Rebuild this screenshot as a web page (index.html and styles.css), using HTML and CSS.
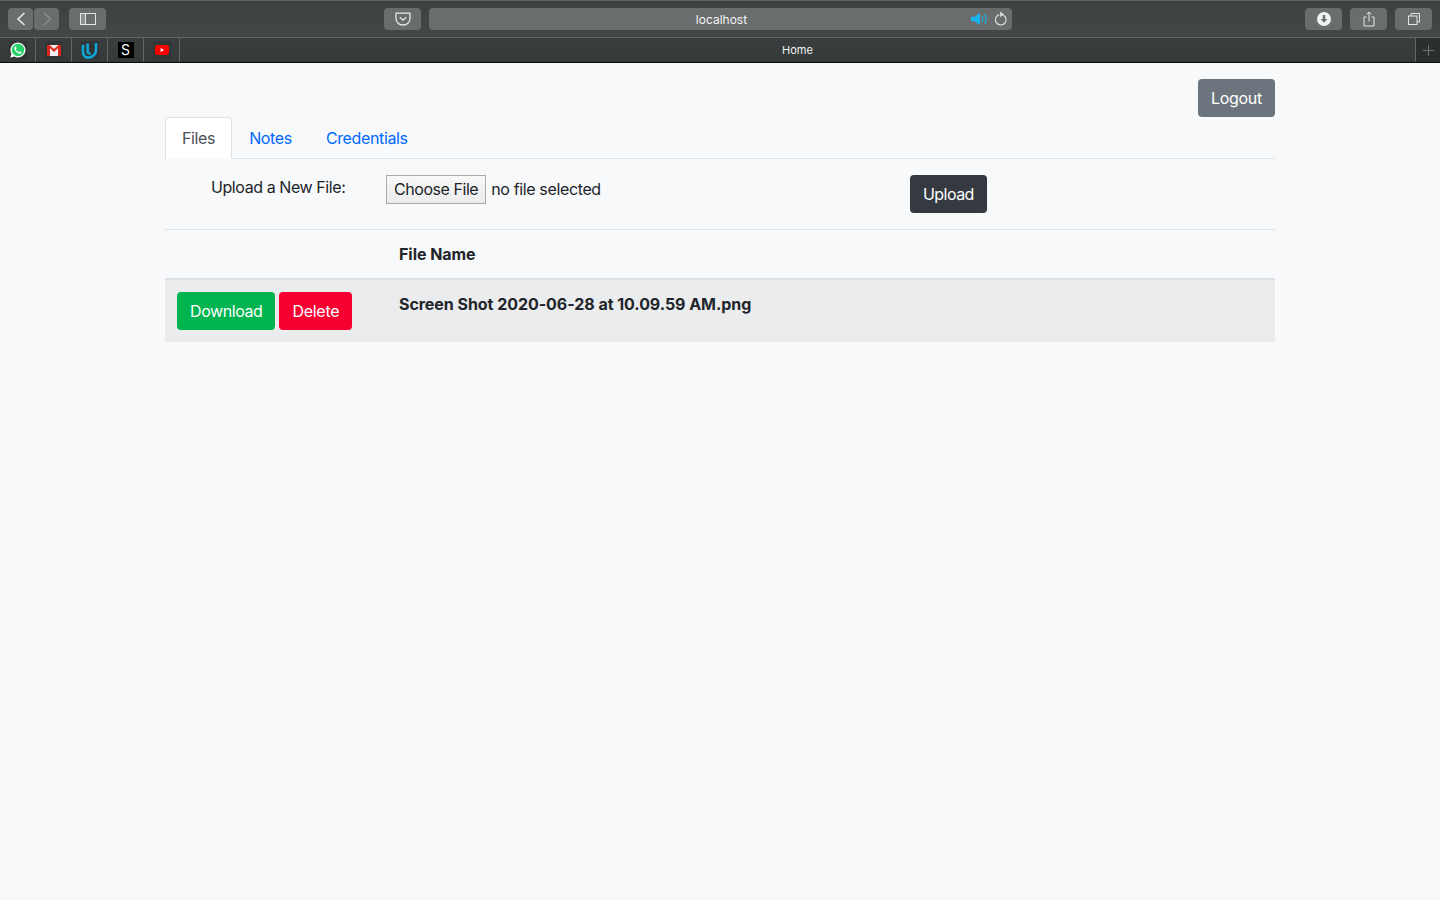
FILE: index.html
```html
<!DOCTYPE html>
<html lang="en">
<head>
  <meta charset="UTF-8" />
  <meta name="viewport" content="width=device-width, initial-scale=1.0" />
  <title>Home</title>
  <link rel="stylesheet" href="styles.css">
</head>
<body>
  <div class="browser-bar">
    <div class="toolbar">
      <div class="tool tool-back">
        <svg width="12" height="16" viewBox="0 0 12 16"><path d="M9.5 2 L3 8 L9.5 14" fill="none" stroke="#e8e9e9" stroke-width="1.6"/></svg>
      </div>
      <div class="tool tool-forward">
        <svg width="12" height="16" viewBox="0 0 12 16"><path d="M3 2 L9.5 8 L3 14" fill="none" stroke="#8e9191" stroke-width="1.4"/></svg>
      </div>
      <div class="tool tool-sidebar">
        <svg width="16" height="12" viewBox="0 0 16 12"><rect x="0.5" y="0.5" width="15" height="11" fill="none" stroke="#e4e5e5"/><rect x="1" y="1" width="4.5" height="10" fill="#8d9090"/><path d="M5.5 0.5 V11.5" stroke="#e4e5e5"/></svg>
      </div>
      <div class="tool tool-pocket">
        <svg width="16" height="14" viewBox="0 0 16 14"><path d="M1 1.2 H15 V6.5 C15 10.5 11.8 13 8 13 C4.2 13 1 10.5 1 6.5 Z" fill="none" stroke="#e8e9e9" stroke-width="1.3" stroke-linejoin="round"/><path d="M4.8 5.2 L8 8.2 L11.2 5.2" fill="none" stroke="#e8e9e9" stroke-width="1.3"/></svg>
      </div>
      <div class="address">
        <span class="address-text">localhost</span>
        <svg class="icon-sound" width="17" height="12" viewBox="0 0 17 12"><path d="M0 3.8 H3.5 L9 0 V12 L3.5 8.2 H0 Z" fill="#19b5f1"/><path d="M11 3 Q12.6 6 11 9 M13.8 1 Q16.6 6 13.8 11" fill="none" stroke="#19b5f1" stroke-width="1.1"/></svg>
        <svg class="icon-reload" width="12" height="15" viewBox="0 0 12 15"><path d="M8.6 4.2 A5.3 5.3 0 1 1 4.2 3.6" fill="none" stroke="#dfe0e0" stroke-width="1.1"/><path d="M5.2 0.6 L9.2 3.6 L5.2 6 Z" fill="#dfe0e0"/></svg>
      </div>
      <div class="tool tool-download">
        <svg width="14" height="14" viewBox="0 0 14 14"><circle cx="7" cy="7" r="7" fill="#f0f1f1"/><path d="M5.8 3 H8.2 V7 H10.4 L7 10.8 L3.6 7 H5.8 Z" fill="#6a6d6d"/></svg>
      </div>
      <div class="tool tool-share">
        <svg width="12" height="16" viewBox="0 0 12 16"><path d="M3.5 6 H1 V15 H11 V6 H8.5" fill="none" stroke="#e4e5e5" stroke-width="1"/><path d="M6 10.5 V1.2 M3.8 3.2 L6 1 L8.2 3.2" fill="none" stroke="#e4e5e5" stroke-width="1"/></svg>
      </div>
      <div class="tool tool-tabs">
        <svg width="12" height="12" viewBox="0 0 12 12"><rect x="0.5" y="3" width="8.5" height="8.5" fill="none" stroke="#e4e5e5"/><path d="M3 3 V0.5 H11.5 V9 H9" fill="none" stroke="#e4e5e5"/></svg>
      </div>
    </div>
    <div class="tabstrip">
      <div class="pin">
        <span class="pin-box">
          <svg width="16" height="16" viewBox="0 0 16 16"><path d="M0.3 15.7 L1.4 11.7 A7.5 7.5 0 1 1 4.3 14.6 Z" fill="#fff"/><circle cx="8" cy="8" r="6.2" fill="#25d366"/><path d="M5.6 4.3 L6.6 6.2 L5.9 7.2 C6.5 8.5 7.5 9.5 8.8 10.1 L9.9 9.3 L11.8 10.4 C11.4 11.6 10.2 12 9.2 11.7 C6.9 11 5 9.1 4.4 6.8 C4.1 5.7 4.6 4.7 5.6 4.3 Z" fill="#fff"/></svg>
        </span>
      </div>
      <div class="pin">
        <span class="pin-box">
          <svg width="14" height="11" viewBox="0 0 14 11"><rect width="14" height="11" fill="#eee"/><path d="M0 0 H3 V11 H0 Z M11 0 H14 V11 H11 Z" fill="#d5281f"/><path d="M0 0 H2.5 L7 4 L11.5 0 H14 L7 7 Z" fill="#e8261c"/></svg>
        </span>
      </div>
      <div class="pin">
        <span class="pin-box">
          <svg width="17" height="17" viewBox="0 0 17 17"><path d="M2 2.8 V10 C2 13.8 4.4 15.6 7.4 15.6 C11 15.6 15 12.6 15 8.2 V1 M6.6 1.6 V9 C6.6 10.8 7.6 12 9.6 11.4" fill="none" stroke="#0ea5d8" stroke-width="2.6"/></svg>
        </span>
      </div>
      <div class="pin">
        <span class="pin-s">S</span>
      </div>
      <div class="pin">
        <span class="pin-box">
          <svg width="14" height="10" viewBox="0 0 14 10"><rect width="14" height="10" rx="2.4" fill="#f00"/><path d="M5.6 3 L9.2 5 L5.6 7 Z" fill="#fff"/></svg>
        </span>
      </div>
      <div class="tab-title">Home</div>
      <div class="tab-new">
        <svg width="11" height="11" viewBox="0 0 11 11"><path d="M5.5 0 V11 M0 5.5 H11" stroke="#6f7272" stroke-width="1"/></svg>
      </div>
    </div>
  </div>

  <div class="container">
    <div class="top-actions">
      <button class="btn btn-secondary">Logout</button>
    </div>

    <ul class="nav-tabs">
      <li class="nav-link active">Files</li>
      <li class="nav-link">Notes</li>
      <li class="nav-link">Credentials</li>
    </ul>

    <form class="upload-row">
      <label class="upload-label">Upload a New File:</label>
      <div class="upload-file">
        <span class="file-button">Choose File</span>
        <span class="file-name">no file selected</span>
      </div>
      <div><button type="button" class="btn btn-dark">Upload</button></div>
    </form>

    <table class="table">
      <thead>
        <tr>
          <th class="col-actions"></th>
          <th>File Name</th>
        </tr>
      </thead>
      <tbody>
        <tr>
          <td class="col-actions">
            <div class="row-actions">
              <button class="btn btn-success">Download</button>
              <button class="btn btn-danger">Delete</button>
            </div>
          </td>
          <th>Screen Shot 2020-06-28 at 10.09.59 AM.png</th>
        </tr>
      </tbody>
    </table>
  </div>
</body>
</html>
```

FILE: styles.css
```css
* {
  box-sizing: border-box;
}

body {
  margin: 0;
  min-height: 900px;
  background: #f8f9fa;
  color: #212529;
  font-family: Inter, "Liberation Sans", sans-serif;
  font-size: 16px;
  line-height: 24px;
}

/* browser chrome */
.browser-bar {
  height: 63px;
  background: #3a3e3f;
  border-bottom: 1px solid #0c0c0c;
}

.toolbar {
  display: flex;
  height: 38px;
  padding-top: 7px;
  background: linear-gradient(#3d4142, #434748);
  border-top: 1px solid #5e6161;
  border-bottom: 1px solid #626565;
}

.tool {
  display: flex;
  align-items: center;
  justify-content: center;
  width: 37px;
  height: 22px;
  background: #6a6d6d;
  border-radius: 4px;
}

.tool-back {
  width: 25px;
  margin-left: 8px;
}

.tool-forward {
  width: 25px;
  margin-left: 1px;
}

.tool-sidebar {
  margin-left: 10px;
}

.tool-pocket {
  margin-left: 278px;
}

.address {
  position: relative;
  display: flex;
  align-items: center;
  justify-content: center;
  width: 583px;
  height: 22px;
  margin-left: 8px;
  padding: 2px 0 0 2px;
  background: #6a6d6d;
  border-radius: 4px;
}

.address-text {
  color: #f2f3f3;
  font-size: 12px;
  line-height: 20px;
}

.icon-sound {
  position: absolute;
  top: 5px;
  right: 24px;
}

.icon-reload {
  position: absolute;
  top: 3px;
  right: 5px;
}

.tool-download {
  margin-left: 293px;
}

.tool-share,
.tool-tabs {
  margin-left: 8px;
}

.tabstrip {
  display: flex;
  height: 24px;
  background: linear-gradient(#3a3e3f, #36393a);
}

.pin {
  display: flex;
  align-items: center;
  justify-content: center;
  width: 36px;
  border-right: 1px solid #646767;
}

.pin-box {
  display: flex;
  align-items: center;
  justify-content: center;
  width: 18px;
  height: 18px;
  background: #323536;
}

.pin-s {
  width: 16px;
  height: 16px;
  background: #000;
  color: #fff;
  font-size: 14px;
  line-height: 16px;
  text-align: center;
}

.tab-title {
  flex: 1;
  color: #f2f3f3;
  font-size: 11px;
  line-height: 24px;
  text-align: center;
}

.tab-new {
  display: flex;
  align-items: center;
  justify-content: center;
  width: 25px;
  background: #2c2f30;
  border-left: 1px solid #646767;
}

/* page */
.container {
  width: 1110px;
  margin: 0 auto;
  padding-top: 16px;
}

.top-actions {
  display: flex;
  justify-content: flex-end;
}

.btn {
  padding: 6px 12px;
  border: 1px solid transparent;
  border-radius: 4px;
  color: #fff;
  font-family: inherit;
  font-size: 16px;
  line-height: 24px;
  letter-spacing: -0.42px;
}

.btn-secondary {
  background: #6c757d;
  letter-spacing: -0.27px;
}

.btn-dark {
  background: #343a40;
  letter-spacing: -0.55px;
}

.btn-success {
  background: #00b44f;
}

.btn-danger {
  background: #f70031;
  letter-spacing: -0.28px;
}

.nav-tabs {
  display: flex;
  height: 42px;
  margin: 0;
  padding: 0;
  list-style: none;
  border-bottom: 1px solid #dee2e6;
}

.nav-link {
  height: 42px;
  padding: 8px 16px;
  border: 1px solid transparent;
  border-radius: 4px 4px 0 0;
  color: #0069ff;
  letter-spacing: -0.36px;
}

.nav-link.active {
  background: #fff;
  border-color: #dee2e6 #dee2e6 #fff;
  color: #495057;
}

.upload-row {
  display: grid;
  grid-template-columns: 221px 524px 1fr;
  height: 70px;
  padding-top: 16px;
}

.upload-label {
  padding-left: 46px;
  letter-spacing: -0.42px;
}

.upload-file {
  display: flex;
  align-items: flex-start;
  gap: 5px;
}

.file-button {
  height: 29px;
  padding: 0 7px;
  background: linear-gradient(#f8f8f8, #ececec);
  border: 1px solid #aaa;
  letter-spacing: -0.45px;
  line-height: 27px;
}

.file-name {
  letter-spacing: -0.36px;
  line-height: 29px;
}

.table {
  width: 100%;
  border-collapse: collapse;
}

.table th,
.table td {
  padding: 12px;
  text-align: left;
  vertical-align: top;
  letter-spacing: -0.05px;
}

.table thead th {
  border-top: 1px solid #dee2e6;
  border-bottom: 2px solid #dee2e6;
}

.table tbody tr {
  background: #ebecee;
}

.col-actions {
  width: 222px;
}

.row-actions {
  display: flex;
  gap: 4px;
}
```
